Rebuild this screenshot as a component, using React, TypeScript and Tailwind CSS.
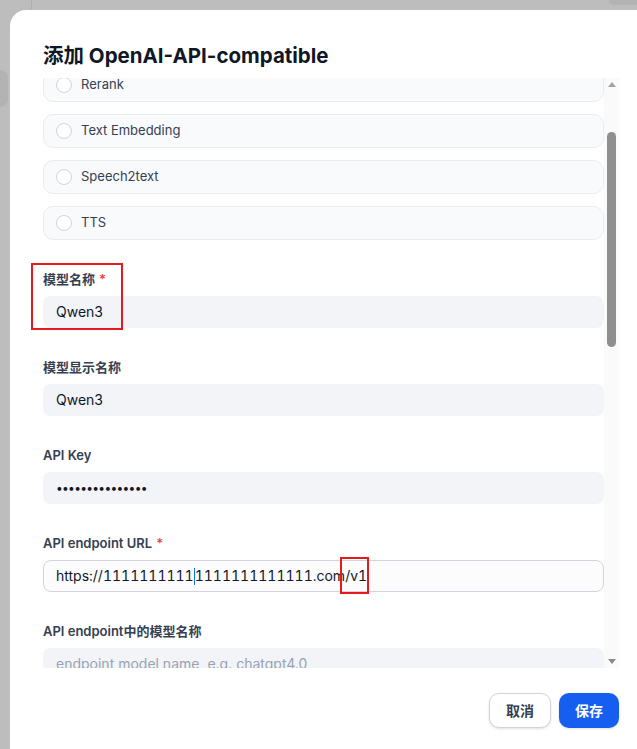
import React from "react";

const types = ["Rerank", "Text Embedding", "Speech2text", "TTS"];

function RadioCard({ label }: { label: string }) {
  return (
    <div className="flex h-[34px] shrink-0 items-center gap-[9px] rounded-[10px] border border-[#eaecf0] bg-[#f9fafb] pl-3">
      <span className="h-4 w-4 rounded-full border-[1.5px] border-[#d0d5dd] bg-white" />
      <span className="text-[13px] text-[#354052]">{label}</span>
    </div>
  );
}

function FieldLabel({ text, required }: { text: string; required?: boolean }) {
  return (
    <div className="flex h-5 items-center text-[13px] font-semibold text-[#354052]">
      {text}
      {required ? <span className="ml-1 text-[#f04438]">*</span> : null}
    </div>
  );
}

function Field({
  label,
  required,
  children,
  mark,
}: {
  label: string;
  required?: boolean;
  children: React.ReactNode;
  mark?: boolean;
}) {
  return (
    <div className="relative mt-[30px] flex flex-col gap-[6px]">
      <FieldLabel text={label} required={required} />
      {children}
      {mark ? (
        <div className="absolute left-[-12px] top-[-7px] h-[67px] w-[92px] border-2 border-[#e8191d]" />
      ) : null}
    </div>
  );
}

function GrayInput({ value, placeholder }: { value?: string; placeholder?: string }) {
  return (
    <div className="flex h-8 shrink-0 items-center rounded-lg bg-[#f2f4f7] px-[13px] text-sm">
      {value ? (
        <span className="text-[#101828]">{value}</span>
      ) : (
        <span className="text-[#98a2b3]">{placeholder}</span>
      )}
    </div>
  );
}

function Scrollbar() {
  return (
    <div className="flex w-[15px] shrink-0 flex-col items-center bg-[#fafafa]">
      <div className="mt-[4px] h-0 w-0 border-x-[4px] border-b-[5px] border-x-transparent border-b-[#a3a3a3]" />
      <div className="mt-[45px] h-[215px] w-[9px] rounded-full bg-[#8f8f8f]" />
      <div className="flex-1" />
      <div className="mb-[4px] h-0 w-0 border-x-[4px] border-t-[5px] border-x-transparent border-t-[#8a8a8a]" />
    </div>
  );
}

export default function App() {
  return (
    <div
      className="relative h-[749px] w-[637px] overflow-hidden bg-[#bdbdbd]"
      style={{ fontFamily: 'Inter, "Noto Sans CJK SC", sans-serif' }}
    >
      {/* background app behind the overlay */}
      <div className="absolute left-[31px] top-0 h-[12px] w-px bg-[#b0b0b0]" />
      <div className="absolute left-0 top-[70px] h-[37px] w-[8px] rounded-r-lg bg-[#b3b3b3]" />
      <div className="absolute right-0 top-0 h-[5px] w-[28px] rounded-bl-md bg-[#b3b3b3]" />

      <div className="absolute left-[10px] top-[10px] w-[642px] rounded-2xl bg-white pb-10 pl-[33px] pr-[33px] pt-[32px]">
        <h1 className="h-7 text-[20.5px] font-bold leading-7 text-[#101828]">
          添加 OpenAI-API-compatible
        </h1>

        <div className="mt-2 flex h-[590px]">
          <div className="ml-[-14px] flex flex-1 flex-col overflow-hidden pl-[14px]">
            <div className="mt-[-10px] flex flex-col gap-3">
              {types.map((t) => (
                <RadioCard key={t} label={t} />
              ))}
            </div>

            <Field label="模型名称" required mark>
              <GrayInput value="Qwen3" />
            </Field>

            <Field label="模型显示名称">
              <GrayInput value="Qwen3" />
            </Field>

            <Field label="API Key">
              <div className="flex h-8 shrink-0 items-center rounded-lg bg-[#f2f4f7] px-[13px] text-[12px] tracking-[-0.7px] text-[#101828]">
                •••••••••••••••
              </div>
            </Field>

            <Field label="API endpoint URL" required>
              <div className="flex h-8 shrink-0 items-center rounded-lg border border-[#d0d5dd] bg-[#fcfcfd] px-3 text-sm tabular-nums text-[#101828]">
                <span>https://1111111111</span>
                <span className="inline-block h-[17px] w-px bg-[#1570ef]" />
                <span>1111111111111.com</span>
                <span className="relative">
                  /v1
                  <span className="absolute bottom-[-8px] left-[-5px] right-[-2px] top-[-9px] border-2 border-[#e8191d]" />
                </span>
              </div>
            </Field>

            <Field label="API endpoint中的模型名称">
              <GrayInput placeholder="endpoint model name, e.g. chatgpt4.0" />
            </Field>
          </div>
          <Scrollbar />
        </div>

        <div className="mt-[25px] flex justify-end gap-2">
          <button className="h-[35px] w-[62px] rounded-[10px] border border-[#d0d5dd] bg-white text-sm font-semibold text-[#344054] shadow-sm">
            取消
          </button>
          <button className="h-[35px] w-[60px] rounded-[10px] bg-[#155eef] text-sm font-semibold text-white shadow-sm">
            保存
          </button>
        </div>
      </div>
    </div>
  );
}
